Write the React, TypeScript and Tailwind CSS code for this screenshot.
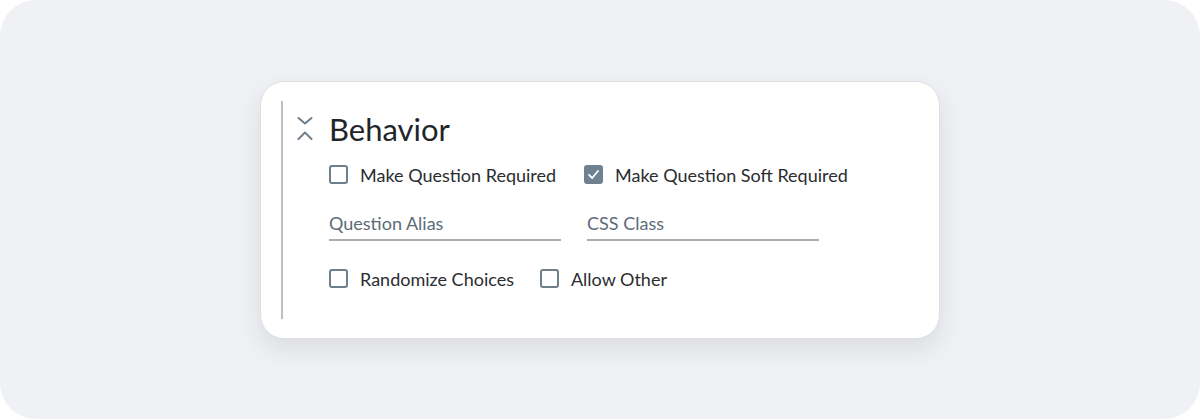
import React from 'react';

function Box({ checked }: { checked?: boolean }) {
  if (checked) {
    return (
      <span className="flex h-[19px] w-[19px] shrink-0 items-center justify-center rounded-[3px] bg-[#6f8191]">
        <svg width="13" height="13" viewBox="0 0 13 13" fill="none">
          <path d="M2 6.8 L5.2 10 L11 3" stroke="#ffffff" strokeWidth="1.8" strokeLinecap="round" strokeLinejoin="round" />
        </svg>
      </span>
    );
  }
  return <span className="h-[19px] w-[19px] shrink-0 rounded-[3px] border-2 border-[#6e7f8c] bg-white" />;
}

function Check({ label, checked }: { label: string; checked?: boolean }) {
  return (
    <label className="flex h-[24px] items-center gap-[12px]">
      <Box checked={checked} />
      <span className="text-[18px] leading-[24px] text-[#2a2d30]">{label}</span>
    </label>
  );
}

function Field({ placeholder }: { placeholder: string }) {
  return (
    <div className="w-[232px] border-b-2 border-[#a9adb2] pb-[3px]">
      <input
        type="text"
        placeholder={placeholder}
        className="block w-full bg-transparent text-[18px] leading-[26px] text-[#2a2d30] outline-none placeholder:text-[#5d6b78]"
      />
    </div>
  );
}

export default function App() {
  return (
    <div className="bg-white" style={{ fontFamily: 'Lato, "Noto Sans", sans-serif' }}>
      <div className="flex h-[419px] w-[1200px] items-center justify-center rounded-[36px] bg-[#f0f1f4]">
        <div className="flex h-[258px] w-[680px] rounded-[24px] border border-[#dcdfe3] bg-white py-[19px] pl-[20px] shadow-[0_10px_24px_rgba(30,40,60,0.10)]">
          <div className="w-[2px] self-stretch bg-[#b9c0c7]" />
          <div className="ml-[14px] flex flex-col">
            <div className="mt-[10px] flex h-[36px] items-center gap-[16px]">
              <svg width="16" height="24" viewBox="0 0 16 24" fill="none" className="-mt-[1px]">
                <path d="M1.5 2 L8 7.5 L14.5 2" stroke="#6d7f8d" strokeWidth="2" strokeLinecap="round" strokeLinejoin="round" />
                <path d="M1.5 23 L8 16.5 L14.5 23" stroke="#6d7f8d" strokeWidth="2" strokeLinecap="round" strokeLinejoin="round" />
              </svg>
              <h2 className="text-[31px] leading-[36px] text-[#222528]">Behavior</h2>
            </div>
            <div className="pl-[32px]">
              <div className="mt-[16px] flex gap-[28px]">
                <Check label="Make Question Required" />
                <Check label="Make Question Soft Required" checked />
              </div>
              <div className="mt-[23px] flex gap-[26px]">
                <Field placeholder="Question Alias" />
                <Field placeholder="CSS Class" />
              </div>
              <div className="mt-[26px] flex gap-[26px]">
                <Check label="Randomize Choices" />
                <Check label="Allow Other" />
              </div>
            </div>
          </div>
        </div>
      </div>
    </div>
  );
}
